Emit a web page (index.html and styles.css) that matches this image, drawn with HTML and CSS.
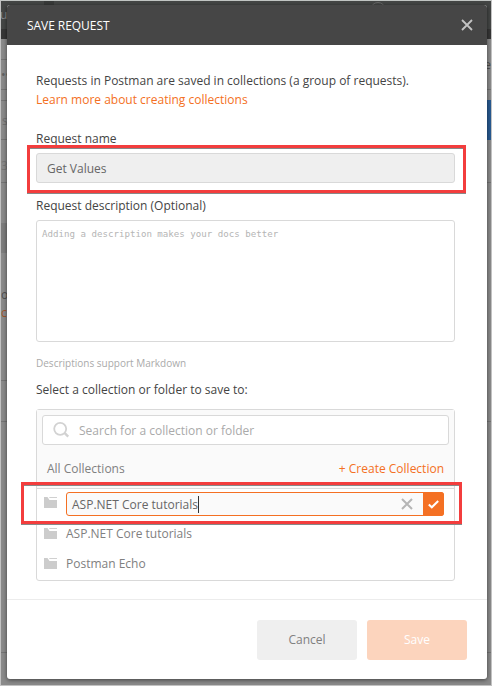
FILE: index.html
```html
<!DOCTYPE html>
<html lang="en">
<head>
<meta charset="utf-8">
<title>Save Request</title>
<link rel="stylesheet" href="styles.css">
</head>
<body>
<div class="screen">
  <div class="backdrop" aria-hidden="true">
    <div class="bg-bar"></div>
    <span class="bg-tab"></span>
    <span class="bg-sync"></span>
    <span class="bg-band"></span>
    <span class="bg-line left l1"></span>
    <span class="bg-line left l2"></span>
    <span class="bg-line left l3"></span>
    <span class="bg-line left l4"></span>
    <span class="bg-line left l5"></span>
    <span class="bg-line left l6"></span>
    <span class="bg-line left l7"></span>
    <span class="bg-line right r1"></span>
    <span class="bg-line right r2"></span>
    <span class="bg-line right r3"></span>
    <span class="bg-line right r4"></span>
    <span class="bg-blue"></span>
    <span class="bg-text t1">u</span>
    <span class="bg-text t2">••</span>
    <span class="bg-text t3">s</span>
    <span class="bg-text t4">3</span>
    <span class="bg-text t5">o</span>
    <span class="bg-text t6">c</span>
    <span class="bg-text t7">e</span>
  </div>
  <section class="modal">
    <header class="modal-header">
      <h1 class="title">SAVE REQUEST</h1>
      <svg class="close" width="12" height="12" viewBox="0 0 12 12"><path d="M1 1L11 11M11 1L1 11" stroke="#c3c3c3" stroke-width="1.8" fill="none"/></svg>
    </header>
    <div class="modal-body">
      <p class="intro">Requests in Postman are saved in collections (a group of requests).</p>
      <a class="learn">Learn more about creating collections</a>
      <label class="label name-label">Request name</label>
      <div class="field name-field">Get Values<span class="highlight name-highlight"></span></div>
      <label class="label desc-label">Request description (Optional)</label>
      <div class="field desc-field">Adding a description makes your docs better</div>
      <p class="hint">Descriptions support Markdown</p>
      <label class="label select-label">Select a collection or folder to save to:</label>
      <div class="picker">
        <div class="picker-head">
          <div class="search">
            <svg width="18" height="18" viewBox="0 0 18 18"><circle cx="7.2" cy="7.8" r="6" stroke="#d2d2d2" stroke-width="1.8" fill="none"/><path d="M11.8 12.2L15.2 15.6" stroke="#d2d2d2" stroke-width="2.4" fill="none"/></svg>
            <span>Search for a collection or folder</span>
          </div>
          <div class="all-row"><span>All Collections</span><a class="create">+ Create Collection</a></div>
        </div>
        <div class="edit-row">
          <svg class="folder" width="13" height="11" viewBox="0 0 13 11"><path d="M0 0H3.5L5.5 3H13V11H0Z" fill="#ccc"/><path d="M5.3 .5H13" stroke="#d0d0d0"/></svg>
          <div class="edit-field">
            <span class="edit-text">ASP.NET Core tutorials</span>
            <svg class="clear" width="12" height="12" viewBox="0 0 12 12"><path d="M1 1L11 11M11 1L1 11" stroke="#b5b5b5" stroke-width="2" fill="none"/></svg>
            <span class="confirm"><svg width="11" height="9" viewBox="0 0 11 9"><path d="M.8 4.5L3.8 7.3L10.2 1" stroke="#fff" stroke-width="2" fill="none"/></svg></span>
          </div>
          <span class="highlight edit-highlight"></span>
        </div>
        <div class="item">
          <svg class="folder" width="13" height="11" viewBox="0 0 13 11"><path d="M0 0H3.5L5.5 3H13V11H0Z" fill="#ccc"/><path d="M5.3 .5H13" stroke="#d0d0d0"/></svg>
          <span>ASP.NET Core tutorials</span>
        </div>
        <div class="item">
          <svg class="folder" width="13" height="11" viewBox="0 0 13 11"><path d="M0 0H3.5L5.5 3H13V11H0Z" fill="#ccc"/><path d="M5.3 .5H13" stroke="#d0d0d0"/></svg>
          <span>Postman Echo</span>
        </div>
      </div>
    </div>
    <footer class="modal-footer">
      <div class="btn cancel">Cancel</div>
      <div class="btn save">Save</div>
    </footer>
  </section>
</div>
</body>
</html>
```
FILE: styles.css
```css
* { box-sizing: border-box; }
body { margin: 0; font-family: "Open Sans", "Noto Sans", sans-serif; font-size: 12px; line-height: 18px; color: #444; }
p, h1 { margin: 0; }
svg { display: block; flex: none; }
.screen { position: relative; width: 492px; height: 686px; padding: 4px 4px 5px 6px; border: 1px solid #c2c2c2; border-top-color: #c0c4c2; background: #8a8a8a; overflow: hidden; }

/* Dimmed application behind the dialog */
.backdrop { position: absolute; inset: 0; overflow: hidden; }
.backdrop > * { position: absolute; }
.bg-bar { left: 0; right: 0; top: 0; height: 38px; background: linear-gradient(#444645 28px, #363636 28px); }
.bg-tab { left: 43px; width: 10px; top: 0; height: 4px; background: #383a39; }
.bg-sync { left: 369px; top: 1px; width: 16px; height: 16px; border: 1px solid #666; border-radius: 50%; }
.bg-band { left: 0; top: 222px; width: 7px; height: 30px; background: #7d7d7d; }
.bg-line { height: 1px; background: #747474; width: 7px; }
.left { left: 0; }
.right { right: 0; }
.l1 { top: 58px; } .l2 { top: 88px; } .l3 { top: 99px; } .l4 { top: 138px; } .l5 { top: 181px; } .l6 { top: 420px; } .l7 { top: 651px; }
.r1 { top: 88px; } .r2 { top: 181px; } .r3 { top: 420px; } .r4 { top: 651px; }
.left.l6 { box-shadow: 0 -41px #747474; }
.bg-blue { right: 0; top: 99px; width: 5px; height: 40px; background: #285a91; }
.bg-text { color: #606060; white-space: nowrap; line-height: 16px; }
.t1 { left: -1px; top: 6px; color: #888; }
.t2 { left: 0; top: 66px; }
.t3 { left: 1px; top: 112px; color: #707070; }
.t4 { left: 0; top: 157px; color: #777; }
.t5 { left: 0; top: 286px; color: #505050; }
.t6 { left: 0; top: 304px; color: #a1562a; }
.t7 { right: 0; top: 56px; color: #505050; }

.modal { position: relative; width: 480px; height: 674px; display: flex; flex-direction: column; background: #fff; border-radius: 3px; box-shadow: 0 1px 4px rgba(0,0,0,.55); }
.modal-header { height: 40px; flex: none; padding: 0 14px 0 20px; display: flex; align-items: center; justify-content: space-between; background: #464646; border-radius: 3px 3px 0 0; }
.title { padding-top: 1px; font-size: 12px; font-weight: 500; letter-spacing: -.05px; color: #fff; }
.modal-body { height: 555px; flex: none; padding: 27px 32px 0 29px; border-bottom: 1px solid #ececec; display: flex; flex-direction: column; }
.intro { line-height: 18px; white-space: nowrap; }
.learn { margin-top: 1px; color: #f47023; }
.label { line-height: 18px; }
.name-label { margin-top: 21px; }
.field { border: 1px solid #d9d9d9; border-radius: 3px; flex: none; }
.name-field { position: relative; height: 30px; margin-top: 5px; padding: 0 10px; line-height: 29px; background: #efefef; color: #666; }
.highlight { position: absolute; border: 3px solid #f33d3d; box-shadow: 0 1px #888, inset 0 1px #888; }
.name-highlight { left: -10px; top: -9px; width: 439px; height: 48px; }
.desc-label { margin-top: 14px; }
.desc-field { height: 122px; margin-top: 5px; padding: 5px; font: 9.15px/16px "DejaVu Sans Mono", monospace; color: #b5b5b5; }
.hint { margin-top: 12px; font-size: 10px; font-weight: 500; color: #aaa; }
.select-label { margin-top: 9px; }
.picker { height: 172px; flex: none; margin-top: 10px; border: 1px solid #d9d9d9; border-radius: 3px; }
.picker-head { height: 79px; padding: 5px 5px 0; background: #fafafa; border-bottom: 1px solid #d9d9d9; }
.search { height: 30px; padding: 1px 10px 0; display: flex; align-items: center; gap: 8px; border: 1px solid #d9d9d9; border-radius: 3px; background: #fff; color: #aaa; }
.search svg { margin-top: -1px; }
.all-row { height: 43px; padding: 5px 5px 0; display: flex; align-items: center; justify-content: space-between; color: #808080; }
.create { color: #f47023; }
.edit-row { position: relative; height: 30px; padding: 3px 10px 0 7px; display: flex; }
.folder { margin-right: 9px; }
.edit-row .folder { margin-top: 5px; }
.edit-field { flex: 1; height: 24px; display: flex; align-items: center; border: 1px solid #f47023; border-radius: 3px; background: #fafafa; color: #666; padding-left: 5px; }
.edit-text { line-height: 17px; border-right: 1px solid #333; }
.clear { margin-left: auto; margin-right: 10px; }
.confirm { width: 21px; height: 24px; margin-right: -1px; display: flex; align-items: center; justify-content: center; background: #f47023; border-radius: 0 3px 3px 0; }
.edit-highlight { left: -16px; top: -7px; width: 441px; height: 42px; }
.item { height: 30px; padding: 0 7px; display: flex; align-items: center; color: #808080; }
.item .folder { margin-top: -2px; }
.modal-footer { flex: 1; padding: 20px 20px 0 0; display: flex; justify-content: flex-end; gap: 10px; }
.btn { width: 100px; height: 40px; border-radius: 3px; line-height: 39px; text-align: center; }
.cancel { background: #efefef; color: #808080; }
.save { background: #fcd4bd; color: #fff; }
```
